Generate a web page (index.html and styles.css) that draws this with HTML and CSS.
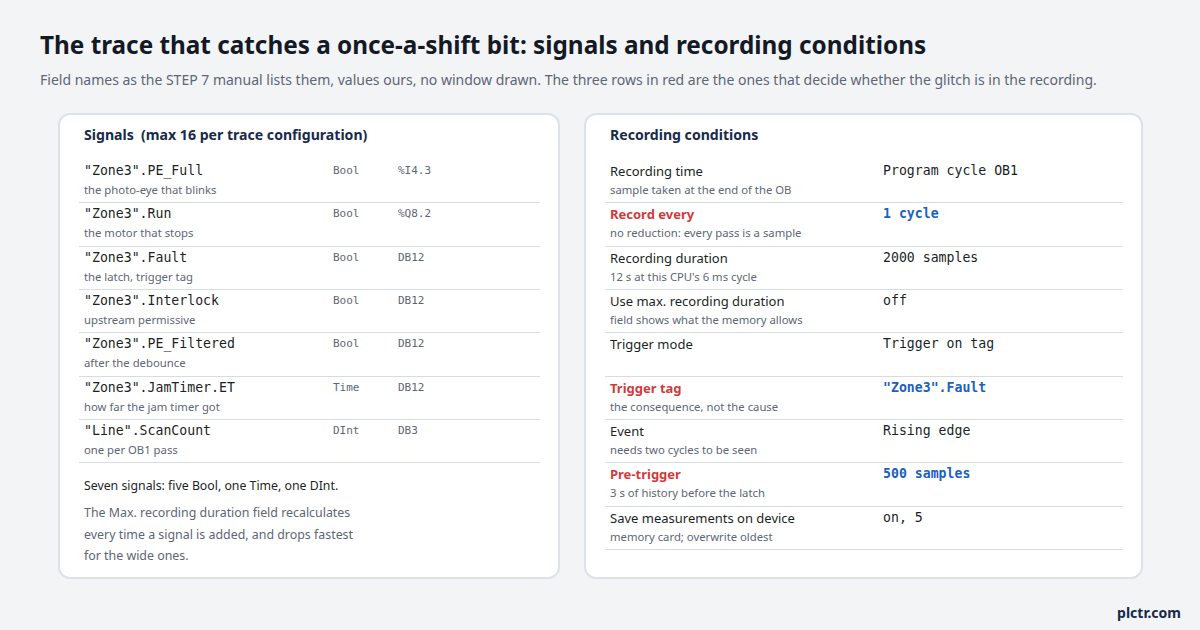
FILE: index.html
```html
<!DOCTYPE html>
<html lang="en">
<head>
<meta charset="utf-8">
<title>Trace signals and recording conditions</title>
<link rel="stylesheet" href="styles.css">
</head>
<body>
<main class="page">
  <h1 class="title">The trace that catches a once-a-shift bit: signals and recording conditions</h1>
  <p class="subtitle">Field names as the STEP 7 manual lists them, values ours, no window drawn. The three rows in red are the ones that decide whether the glitch is in the recording.</p>

  <div class="cards">
    <section class="card">
      <h2 class="card-title">Signals&nbsp; (max 16 per trace configuration)</h2>
      <div class="rows">
        <div class="row sig">
          <div class="name">"Zone3".PE_Full</div><div class="type">Bool</div><div class="addr">%I4.3</div>
          <div class="desc">the photo-eye that blinks</div>
        </div>
        <div class="row sig">
          <div class="name">"Zone3".Run</div><div class="type">Bool</div><div class="addr">%Q8.2</div>
          <div class="desc">the motor that stops</div>
        </div>
        <div class="row sig">
          <div class="name">"Zone3".Fault</div><div class="type">Bool</div><div class="addr">DB12</div>
          <div class="desc">the latch, trigger tag</div>
        </div>
        <div class="row sig">
          <div class="name">"Zone3".Interlock</div><div class="type">Bool</div><div class="addr">DB12</div>
          <div class="desc">upstream permissive</div>
        </div>
        <div class="row sig">
          <div class="name">"Zone3".PE_Filtered</div><div class="type">Bool</div><div class="addr">DB12</div>
          <div class="desc">after the debounce</div>
        </div>
        <div class="row sig">
          <div class="name">"Zone3".JamTimer.ET</div><div class="type">Time</div><div class="addr">DB12</div>
          <div class="desc">how far the jam timer got</div>
        </div>
        <div class="row sig">
          <div class="name">"Line".ScanCount</div><div class="type">DInt</div><div class="addr">DB3</div>
          <div class="desc">one per OB1 pass</div>
        </div>
      </div>
      <p class="summary">Seven signals: five Bool, one Time, one DInt.</p>
      <p class="note">The Max. recording duration field recalculates every time a signal is added, and drops fastest for the wide ones.</p>
    </section>

    <section class="card">
      <h2 class="card-title">Recording conditions</h2>
      <div class="rows">
        <div class="row cond">
          <div class="label">Recording time</div><div class="value">Program cycle OB1</div>
          <div class="desc">sample taken at the end of the OB</div>
        </div>
        <div class="row cond key">
          <div class="label">Record every</div><div class="value">1 cycle</div>
          <div class="desc">no reduction: every pass is a sample</div>
        </div>
        <div class="row cond">
          <div class="label">Recording duration</div><div class="value">2000 samples</div>
          <div class="desc">12 s at this CPU's 6 ms cycle</div>
        </div>
        <div class="row cond">
          <div class="label">Use max. recording duration</div><div class="value">off</div>
          <div class="desc">field shows what the memory allows</div>
        </div>
        <div class="row cond">
          <div class="label">Trigger mode</div><div class="value">Trigger on tag</div>
          <div class="desc"></div>
        </div>
        <div class="row cond key">
          <div class="label">Trigger tag</div><div class="value">"Zone3".Fault</div>
          <div class="desc">the consequence, not the cause</div>
        </div>
        <div class="row cond">
          <div class="label">Event</div><div class="value">Rising edge</div>
          <div class="desc">needs two cycles to be seen</div>
        </div>
        <div class="row cond key">
          <div class="label">Pre-trigger</div><div class="value">500 samples</div>
          <div class="desc">3 s of history before the latch</div>
        </div>
        <div class="row cond">
          <div class="label">Save measurements on device</div><div class="value">on, 5</div>
          <div class="desc">memory card; overwrite oldest</div>
        </div>
      </div>
    </section>
  </div>

  <footer class="brand">plctr.com</footer>
</main>
</body>
</html>
```

FILE: styles.css
```css
* { box-sizing: border-box; }
html, body { margin: 0; padding: 0; }
body {
  width: 1200px;
  height: 630px;
  overflow: hidden;
  background: #f3f4f6;
  font-family: "Noto Sans", "Open Sans", sans-serif;
  color: #1a202c;
}
.page {
  padding: 28px 40px 0 40px;
  position: relative;
  height: 630px;
}
.title {
  margin: 0;
  font-size: 24.3px;
  line-height: 34px;
  font-weight: 700;
  color: #131a26;
}
.subtitle {
  margin: 7px 0 0 0;
  font-size: 14px;
  line-height: 22px;
  color: #5d6675;
}
.cards {
  display: grid;
  grid-template-columns: 502px 559px;
  gap: 24px;
  margin: 22px 0 0 18px;
  height: 465px;
}
.card {
  background: #fff;
  border: 2px solid #dde2e8;
  border-radius: 12px;
  padding: 10px 18px 10px 19px;
}
.card-title {
  margin: 0 0 15px 5px;
  font-size: 14.1px;
  line-height: 20px;
  font-weight: 700;
  color: #172a4b;
}
.row {
  display: grid;
  border-bottom: 1px solid #d6dce4;
  padding: 2px 5px 4.33px 5px;
  height: 43.33px;
}
.row.sig { grid-template-columns: 249px 65px 1fr; }
.row.cond { grid-template-columns: 273px 1fr; }
.name {
  font-family: "DejaVu Sans Mono", monospace;
  font-size: 13.2px;
  line-height: 18px;
  color: #1b1f27;
}
.type, .addr {
  font-family: "DejaVu Sans Mono", monospace;
  font-size: 11px;
  line-height: 18px;
  color: #5e6673;
}
.desc {
  grid-column: 1 / -1;
  margin-top: 2px;
  font-size: 11.3px;
  line-height: 16px;
  color: #5d6675;
}
.label {
  font-size: 13px;
  line-height: 18px;
  color: #1b1f27;
}
.value {
  font-family: "DejaVu Sans Mono", monospace;
  font-size: 13.2px;
  line-height: 18px;
  color: #1b1f27;
}
.key .label { color: #d23a3a; font-weight: 700; }
.key .value { color: #1d5fbf; font-weight: 700; }
.summary {
  margin: 14px 0 0 5px;
  font-size: 12.3px;
  line-height: 18px;
  color: #1b1f27;
}
.note {
  margin: 7px 0 0 5px;
  width: 285px;
  font-size: 12.4px;
  line-height: 21.5px;
  color: #5d6675;
}
.brand {
  position: absolute;
  right: 19px;
  bottom: 8px;
  font-size: 14px;
  font-weight: 700;
  color: #172a4b;
}
```
